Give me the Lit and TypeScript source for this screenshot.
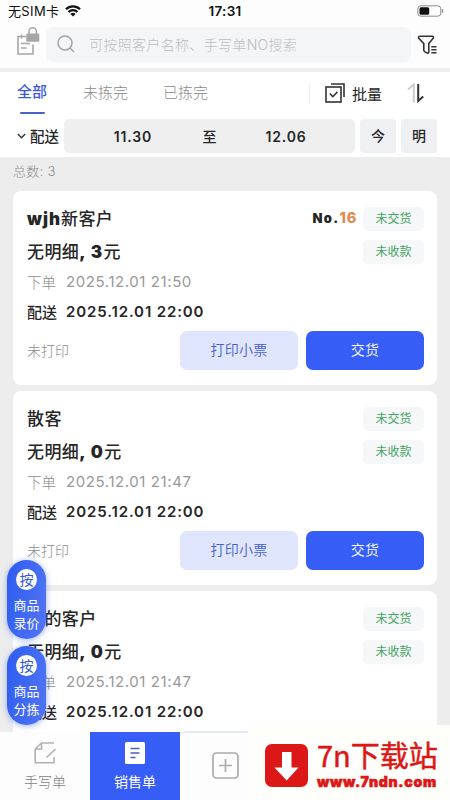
import { LitElement, html, css, svg, nothing } from "lit";
import { customElement, property } from "lit/decorators.js";

interface Order {
  name: string;
  amount: string;
  no?: string;
  placed: string;
  delivery: string;
}

const orders: Order[] = [
  { name: "wjh新客户", amount: "3", no: "16", placed: "2025.12.01 21:50", delivery: "2025.12.01 22:00" },
  { name: "散客", amount: "0", placed: "2025.12.01 21:47", delivery: "2025.12.01 22:00" },
  { name: "我的客户", amount: "0", placed: "2025.12.01 21:47", delivery: "2025.12.01 22:00" },
];

@customElement("order-card")
export class OrderCard extends LitElement {
  @property({ attribute: false }) order!: Order;

  static styles = css`
    :host {
      display: block;
      box-sizing: border-box;
      height: 194px;
      padding: 10px 13px 15px 14px;
      border-radius: 8px;
      background: #fff;
      color: #262626;
    }
    .row { display: flex; align-items: center; white-space: nowrap; }
    .main { height: 33px; font-size: 17px; font-weight: 500; letter-spacing: 0.4px; }
    .latin { font-weight: 900; letter-spacing: 1px; }
    .amount { letter-spacing: 1.4px; }
    .grow { flex: 1; }
    .no { font-size: 13px; font-weight: 900; letter-spacing: 1.4px; margin-right: 6px; }
    .orange { color: #e08a4c; font-size: 14.5px; font-weight: 800; letter-spacing: 0.7px; }
    .tag {
      width: 61px;
      height: 24px;
      line-height: 24px;
      margin-top: 3px;
      border-radius: 5px;
      background: #f6f7f8;
      color: #41a463;
      font-size: 12px;
      font-weight: 400;
      letter-spacing: 0;
      text-align: center;
    }
    .placed { height: 28px; color: #8c8c8c; font-size: 14.5px; font-weight: 300; }
    .delivery { height: 32px; font-size: 15px; font-weight: 500; }
    .label { width: 39px; }
    .placed .date { font-size: 15px; font-weight: 400; color: #999; letter-spacing: 0.58px; }
    .delivery .date { font-weight: 600; letter-spacing: 0.87px; }
    .foot { height: 39px; margin-top: 4px; gap: 8px; color: #8c8c8c; font-size: 14px; font-weight: 300; }
    .foot .grow { margin-top: -1px; }
    .btn {
      width: 118px;
      height: 39px;
      line-height: 38px;
      border-radius: 7px;
      text-align: center;
      font-size: 14px;
      font-weight: 350;
      letter-spacing: 0.2px;
    }
    .print { background: #dfe5fc; color: #4a5fc4; }
    .deliver { background: #365df5; color: #fff; }
  `;

  render() {
    const o = this.order;
    const [, latin, rest] = o.name.match(/^([a-z]*)(.*)$/)!;
    return html`
      <div class="row main">
        <span>${latin ? html`<span class="latin">${latin}</span>` : nothing}${rest}</span>
        <span class="grow"></span>
        ${o.no ? html`<span class="no">No.<span class="orange">${o.no}</span></span>` : nothing}
        <span class="tag">未交货</span>
      </div>
      <div class="row main">
        <span>无明细<span class="latin amount">, ${o.amount}</span>元</span>
        <span class="grow"></span>
        <span class="tag">未收款</span>
      </div>
      <div class="row placed"><span class="label">下单</span><span class="date">${o.placed}</span></div>
      <div class="row delivery"><span class="label">配送</span><span class="date">${o.delivery}</span></div>
      <div class="row foot">
        <span class="grow">未打印</span>
        <span class="btn print">打印小票</span>
        <span class="btn deliver">交货</span>
      </div>
    `;
  }
}

@customElement("app-root")
export class AppRoot extends LitElement {
  static styles = css`
    :host {
      display: flex;
      flex-direction: column;
      position: relative;
      width: 450px;
      height: 800px;
      overflow: hidden;
      background: #ededed;
      color: #262626;
      font-family: Inter, "Noto Sans CJK SC", sans-serif;
      white-space: nowrap;
    }
    svg { display: block; flex: none; }
    .status {
      display: grid;
      grid-template-columns: 1fr auto 1fr;
      align-items: center;
      height: 22px;
      padding: 0 6px 0 8px;
      background: #fdfdfd;
      color: #111;
      font-size: 13px;
    }
    .carrier { display: flex; align-items: center; gap: 6px; letter-spacing: 0.35px; line-height: 20px; }
    .time { font-weight: 600; letter-spacing: 0.3px; font-size: 13.5px; margin-left: -2px; }
    .battery { justify-self: end; }
    .header {
      display: flex;
      align-items: center;
      height: 46px;
      padding: 0 11px 0 15px;
      background: #fdfdfd;
    }
    .note { margin-top: -9px; }
    .search {
      display: flex;
      align-items: center;
      width: 365px;
      height: 35px;
      margin: 0 6px 2px 5px;
      border-radius: 7px;
      background: #f4f5f7;
      color: #bdbdbd;
      font-size: 14px;
      font-weight: 300;
      letter-spacing: 0.33px;
    }
    .search svg { margin: 0 14px 0 11px; }
    .panel { height: 85px; margin-top: 4px; background: #fff; }
    .tabs { display: flex; align-items: center; height: 42px; padding-left: 17px; font-size: 15px; color: #8a8a8a; font-weight: 300; }
    .tab { width: 80px; margin-top: -3px; }
    .tab.active {
      display: flex;
      flex-direction: column;
      align-items: center;
      width: 30px;
      height: 42px;
      margin: 0 36px 0 0;
      line-height: 40px;
      color: #3c5ad8;
      font-weight: 500;
    }
    .tab.active::after { content: ""; width: 25px; height: 2px; flex: none; border-radius: 1px; background: #4a62c8; }
    .sep { width: 1px; height: 20px; margin: 0 15px 0 66px; background: #eee; }
    .batch { color: #262626; font-size: 15px; font-weight: 400; margin: 0 25px 0 7px; }
    .dates { display: flex; align-items: center; height: 34px; margin-top: 5px; padding-left: 17px; font-size: 14px; font-weight: 500; }
    .kind { width: 30px; margin: -2px 4px 0 4px; font-size: 14.5px; }
    .range {
      display: grid;
      grid-template-columns: 138px 15px 138px;
      justify-items: center;
      align-items: center;
      width: 291px;
      height: 34px;
      border-radius: 5px;
      background: #efeff0;
    }
    .num { font-weight: 600; letter-spacing: 0.85px; }
    .day { width: 36px; height: 34px; line-height: 34px; margin-left: 5px; border-radius: 4px; background: #eff0f3; text-align: center; }
    .total { height: 34px; box-sizing: border-box; padding: 4px 0 0 13px; line-height: 20px; color: #8c8c8c; font-size: 13px; font-weight: 300; letter-spacing: 0.3px; }
    .list { display: flex; flex-direction: column; gap: 6px; height: 541px; padding: 0 13px; overflow: hidden; }
    .list order-card { flex: none; }
    .nav { display: flex; height: 68px; flex: none; background: #fdfdfd; }
    .item {
      display: flex;
      flex-direction: column;
      align-items: center;
      width: 90px;
      padding-top: 8px;
      box-sizing: border-box;
      color: #7d7d7d;
      font-size: 14px;
      font-weight: 300;
    }
    .item span { line-height: 20px; margin-top: 8px; }
    .item.active { background: #365df5; color: #fff; font-weight: 400; }
    .item.add { padding-top: 20px; box-shadow: inset 0 1px #e6eaec; }
    .float {
      position: absolute;
      left: 7px;
      display: flex;
      flex-direction: column;
      align-items: center;
      width: 39px;
      height: 79px;
      box-sizing: border-box;
      padding-top: 9px;
      border-radius: 20px;
      background: linear-gradient(100deg, #2d5cf0, #5275f5);
      box-shadow: 0 1px 6px rgba(60, 95, 240, 0.5);
      color: #fff;
      font-size: 13px;
      line-height: 18px;
      text-align: center;
    }
    .pricing { top: 560px; }
    .sorting { top: 646px; }
    .dot { width: 21px; height: 21px; line-height: 21px; margin-bottom: 6px; border-radius: 50%; background: #fff; color: #3559d6; font-size: 14px; }
    .brand {
      position: absolute;
      right: 0;
      bottom: 0;
      display: flex;
      align-items: flex-start;
      width: 202px;
      height: 75px;
      box-sizing: border-box;
      padding: 19px 0 0 17px;
      background: #fefefa;
      color: #dc1717;
    }
    .names { margin: -7px 0 0 9px; }
    .site { font-family: "Noto Sans CJK SC", sans-serif; font-size: 29px; line-height: 34px; font-weight: 400; -webkit-text-stroke: 0.5px #dc1717; }
    .url { margin-top: 3px; font-size: 14px; line-height: 16px; font-weight: 900; letter-spacing: 0.75px; -webkit-text-stroke: 0.6px #dc1717; }
  `;

  private icon(w: number, h: number, body: unknown) {
    return html`<svg width=${w} height=${h} viewBox="0 0 ${w} ${h}" fill="none">${body}</svg>`;
  }

  render() {
    return html`
      <div class="status">
        <span class="carrier">无SIM卡 ${this.icon(16, 12, svg`
          <path d="M1 4.2a10 10 0 0 1 14 0" stroke="#111" stroke-width="2.3"/>
          <path d="M3.5 7a6.4 6.4 0 0 1 9 0" stroke="#111" stroke-width="2.1"/>
          <path d="M8 11.6 5.4 9a3.7 3.7 0 0 1 5.2 0z" fill="#111"/>`)}</span>
        <span class="time">17:31</span>
        <span class="battery">${this.icon(27, 12, svg`
          <rect x=".8" y=".8" width="23" height="10.4" rx="3" stroke="#8a8a8a"/>
          <rect x="2.5" y="2.3" width="9.7" height="7.4" rx="1.5" fill="#111"/>
          <path d="M25.6 4.3v3.4" stroke="#8a8a8a" stroke-width="1.3"/>`)}</span>
      </div>

      <div class="header">
        <span class="note">${this.icon(26, 36, svg`
          <path d="M11 13.5H3V31h15V21.5M6.5 11.5v4M6 20.5h9M6 25h5.5" stroke="#a6a6a6" stroke-width="1.6"/>
          <rect x="11.3" y="10.5" width="13" height="8.2" rx="1.2" fill="#a6a6a6"/>
          <path d="M14 11V8.5a3.7 3.7 0 0 1 7.4 0V11" stroke="#a6a6a6" stroke-width="1.5"/>`)}</span>
        <div class="search">
          ${this.icon(18, 18, svg`
            <circle cx="8" cy="8" r="7" stroke="#a3a3a3" stroke-width="1.5"/>
            <path d="m13 13 4 4" stroke="#a3a3a3" stroke-width="1.5"/>`)}
          可按照客户名称、手写单NO搜索
        </div>
        ${this.icon(22, 20, svg`
          <path d="M3 1.2h12.3c1.2 0 1.6 1.2.9 2l-4.4 5.3v8.2c0 1.3-1 1.7-2 1.2L7.6 16.6c-.6-.4-.8-.8-.8-1.6V8.6L1.8 3.2C1.2 2.4 1.6 1.2 3 1.2z" stroke="#333" stroke-width="1.6"/>
          <path d="M14.3 11.7h5.2M14.3 14.7h5.2M14.3 17.7h5.2" stroke="#333" stroke-width="1.4"/>`)}
      </div>

      <div class="panel">
        <div class="tabs">
          <span class="tab active">全部</span>
          <span class="tab">未拣完</span>
          <span class="tab">已拣完</span>
          <span class="sep"></span>
          ${this.icon(20, 20, svg`
            <rect x="1" y="4" width="15" height="15" stroke="#333" stroke-width="1.6"/>
            <path d="M6 1h13v13M4.8 10.5l3 3.2 4.6-4.8" stroke="#333" stroke-width="1.6"/>`)}
          <span class="batch">批量</span>
          ${this.icon(18, 20, svg`
            <path d="M1 6.5 6.8 1.5v18" stroke="#ccc" stroke-width="2"/>
            <path d="M11.2 1v17l5-4.5" stroke="#333" stroke-width="2"/>`)}
        </div>
        <div class="dates">
          ${this.icon(9, 8, svg`<path d="m.8 2 3.7 3.8L8.2 2" stroke="#333" stroke-width="1.4"/>`)}
          <span class="kind">配送</span>
          <div class="range"><span class="num">11.30</span><span>至</span><span class="num">12.06</span></div>
          <span class="day">今</span>
          <span class="day">明</span>
        </div>
      </div>

      <div class="total">总数: 3</div>

      <div class="list">${orders.map((o) => html`<order-card .order=${o}></order-card>`)}</div>

      <div class="nav">
        <div class="item">
          ${this.icon(22, 24, svg`
            <path d="M20 3H7.5L1.2 9v13.8H20V17M7.5 3v6H1.2M12.5 17.5 21.5 9" stroke="#b2b2b2" stroke-width="1.6"/>`)}
          <span>手写单</span>
        </div>
        <div class="item active">
          ${this.icon(20, 24, svg`
            <rect y="2" width="20" height="22" rx="1.5" fill="#fff"/>
            <path d="M5.5 8.5h9M5.5 13h9M5.5 17.5h5" stroke="#4a5fc4" stroke-width="1.7"/>`)}
          <span>销售单</span>
        </div>
        <div class="item add">
          ${this.icon(27, 27, svg`
            <rect x="1" y="1" width="25" height="25" rx="3.5" stroke="#aaa" stroke-width="1.7"/>
            <path d="M13.5 7v13M7 13.5h13" stroke="#aaa" stroke-width="1.7"/>`)}
        </div>
      </div>

      <div class="float pricing"><span class="dot">按</span>商品<br />录价</div>
      <div class="float sorting"><span class="dot">按</span>商品<br />分拣</div>

      <div class="brand">
        ${this.icon(43, 43, svg`
          <rect width="43" height="43" rx="7" fill="#dc1717"/>
          <path d="M17 8h9.5v15.5h7L21.7 36.5 9.5 23.5H17z" fill="#fff"/>`)}
        <div class="names">
          <div class="site">7n下载站</div>
          <div class="url">www.7ndn.com</div>
        </div>
      </div>
    `;
  }
}
